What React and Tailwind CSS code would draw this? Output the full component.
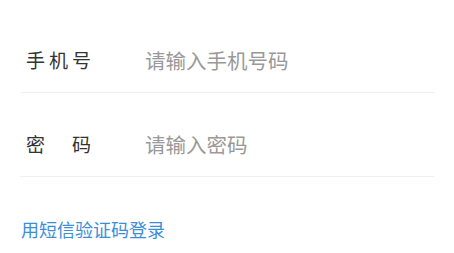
const font = { fontFamily: '"Noto Sans CJK SC", "Noto Sans", sans-serif' };

const Field = ({ label, placeholder, type }) => (
  <div className="flex items-center h-[84px] pt-[18px] pl-[6px] border-b border-[#f0f0f0]">
    <span className="w-[119px] shrink-0 text-[19px] leading-6 tracking-[4px] text-[#333]">{label}</span>
    <input
      type={type}
      placeholder={placeholder}
      className="flex-1 min-w-0 text-[20.5px] leading-6 bg-transparent outline-none text-[#333] placeholder:text-[#999]"
      style={font}
    />
  </div>
);

export default function App() {
  return (
    <div className="w-[454px] h-[253px] bg-white overflow-hidden pt-[9px]" style={font}>
      <div className="mx-5">
        <Field label="手机号" placeholder="请输入手机号码" type="tel" />
        <Field label="密　码" placeholder="请输入密码" type="password" />
        <a className="block mt-[40px] pl-[1px] text-[18px] leading-6 text-[#3b8ed8]">用短信验证码登录</a>
      </div>
    </div>
  );
}
